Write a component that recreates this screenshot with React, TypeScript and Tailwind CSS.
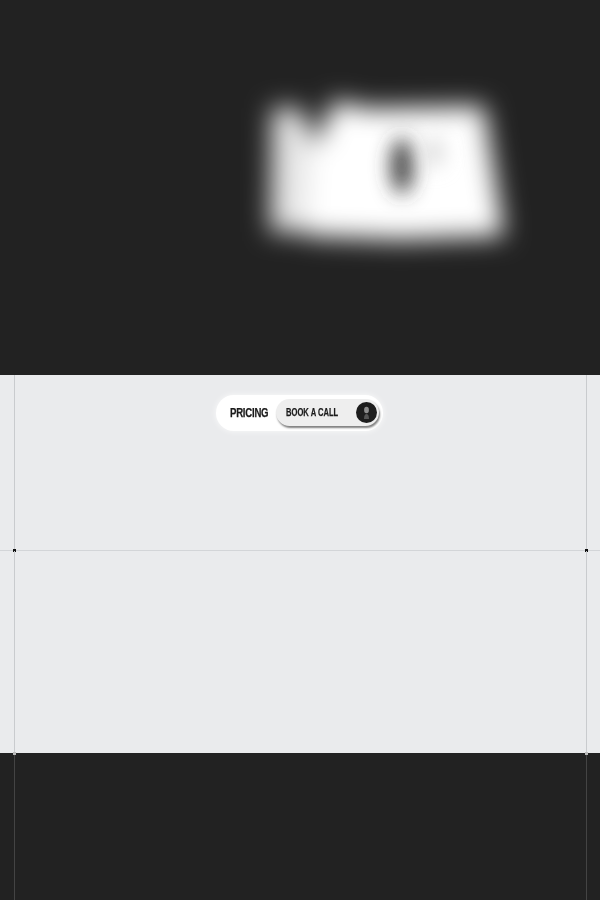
function BlurredMark() {
  return (
    <svg viewBox="0 0 600 375" className="block h-full w-full">
      <defs>
        <filter id="soft" x="-30%" y="-40%" width="160%" height="180%">
          <feGaussianBlur stdDeviation="13" />
        </filter>
        <filter id="softer" x="-200%" y="-100%" width="500%" height="300%">
          <feGaussianBlur stdDeviation="10" />
        </filter>
      </defs>
      <g filter="url(#soft)">
        <polygon points="272,108 300,108 320,150 320,232 270,232" fill="#e6e6e6" />
        <polygon points="334,100 366,108 484,106 494,170 504,236 400,240 306,236 310,160" fill="#ffffff" />
      </g>
      <ellipse cx="402" cy="166" rx="11" ry="28" fill="#3a3a3a" filter="url(#softer)" />
      <ellipse cx="434" cy="152" rx="9" ry="15" fill="#d8d8d8" filter="url(#softer)" />
    </svg>
  );
}

function NavPill() {
  return (
    <div className="flex h-[36px] w-[167px] items-center rounded-full bg-white pb-[1px] pl-[14px] pr-[4px] shadow-[0_0_6px_rgba(255,255,255,0.8)]">
      <span className="w-[46px] origin-left scale-x-[0.8] whitespace-nowrap text-[12px] font-bold tracking-[-0.3px] text-[#1b1b1b] [-webkit-text-stroke:0.25px_#1b1b1b]">PRICING</span>
      <div className="flex h-[27px] flex-1 items-center justify-between rounded-full bg-[#eeeeee] pl-[10px] pr-[2px] shadow-[1px_2px_2px_rgba(0,0,0,0.5)]">
        <span className="origin-left scale-x-[0.76] whitespace-nowrap text-[10px] font-bold text-[#1b1b1b] [-webkit-text-stroke:0.25px_#1b1b1b]">BOOK A CALL</span>
        <div className="flex h-[21px] w-[21px] items-center justify-center rounded-full bg-[#1d1d1d]">
          <svg viewBox="0 0 21 21" className="h-[21px] w-[21px]">
            <ellipse cx="10.5" cy="8" rx="2.4" ry="3.2" fill="#8d8d8d" />
            <path d="M8 17c0-3.500 1-5 2.500-5s2.500 1.500 2.500 5z" fill="#555" />
          </svg>
        </div>
      </div>
    </div>
  );
}

function Corner({ side, tone }: { side: 'left' | 'right'; tone: 'dark' | 'light' }) {
  return (
    <div
      className={`absolute bottom-[-2px] h-[3px] w-[3px] ${side === 'left' ? 'left-[-2px]' : 'right-[-2px]'} ${
        tone === 'dark' ? 'bg-[#111]' : 'bg-[#bbb]'
      }`}
    />
  );
}

export default function App() {
  return (
    <div className="h-[900px] w-[600px] overflow-hidden bg-[#222222] font-['Liberation_Sans',sans-serif]">
      <section className="h-[375px]">
        <BlurredMark />
      </section>

      {/* light band, split by the guide lines */}
      <section className="bg-[#eaebed]">
        <div className="grid h-[176px] grid-cols-[14px_1fr_13px] border-b border-[#d3d5d8]">
          <div />
          <div className="relative flex justify-center border-x border-[#c9cbce] pr-[2px] pt-[20px]">
            <NavPill />
            <Corner side="left" tone="dark" />
            <Corner side="right" tone="dark" />
          </div>
          <div />
        </div>
        <div className="grid h-[202px] grid-cols-[14px_1fr_13px]">
          <div />
          <div className="relative border-x border-[#c9cbce]">
            <Corner side="left" tone="light" />
            <Corner side="right" tone="light" />
          </div>
          <div />
        </div>
      </section>

      <div className="grid h-[147px] grid-cols-[14px_1fr_13px]">
        <div />
        <div className="border-x border-[#444444]" />
        <div />
      </div>
    </div>
  );
}
